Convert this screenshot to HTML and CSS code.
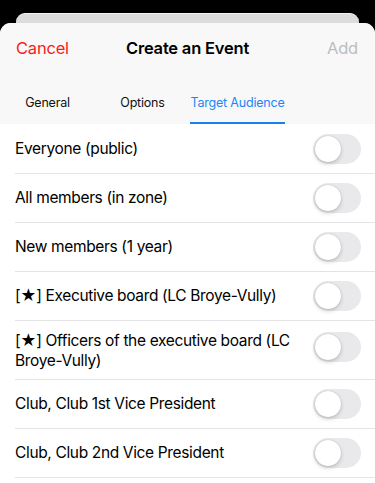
FILE: index.html
```
<!DOCTYPE html>
<html>
<head>
<meta charset="utf-8">
<link rel="stylesheet" href="styles.css">
</head>
<body>
<div class="back-card"></div>
<div class="sheet">
  <div class="header">
    <div class="nav">
      <span class="cancel">Cancel</span>
      <span class="title">Create an Event</span>
      <span class="add">Add</span>
    </div>
    <div class="tabs">
      <div class="tab">General</div>
      <div class="tab">Options</div>
      <div class="tab active">Target Audience</div>
    </div>
  </div>
  <div class="list">
    <div class="row"><div class="inner"><span class="label">Everyone (public)</span><span class="toggle"></span></div></div>
    <div class="row"><div class="inner"><span class="label">All members (in zone)</span><span class="toggle"></span></div></div>
    <div class="row"><div class="inner"><span class="label">New members (1 year)</span><span class="toggle"></span></div></div>
    <div class="row"><div class="inner"><span class="label">[★] Executive board (LC Broye-Vully)</span><span class="toggle"></span></div></div>
    <div class="row"><div class="inner two"><span class="label">[★] Officers of the executive board (LC Broye-Vully)</span><span class="toggle"></span></div></div>
    <div class="row"><div class="inner"><span class="label">Club, Club 1st Vice President</span><span class="toggle"></span></div></div>
    <div class="row"><div class="inner"><span class="label">Club, Club 2nd Vice President</span><span class="toggle"></span></div></div>
  </div>
</div>
</body>
</html>
```
FILE: styles.css
```
html, body {
  margin: 0;
  padding: 0;
  background: #000;
  height: 483px;
  overflow: hidden;
  font-family: "Inter", "Liberation Sans", sans-serif;
}
.back-card {
  margin: 13px 16px 0 16px;
  height: 10px;
  background: #dcdcdc;
  border-top: 1px solid #f4f4f4;
  box-sizing: border-box;
  border-radius: 9px 9px 0 0;
}
.sheet {
  background: #fff;
  border-radius: 11px 11px 0 0;
  overflow: hidden;
  height: 460px;
}
.header {
  background: #f8f8f8;
}
.nav {
  height: 50px;
  display: flex;
  align-items: center;
  justify-content: space-between;
  padding: 0 17px 0 16px;
  font-size: 16.5px;
  letter-spacing: -0.2px;
  position: relative;
}
.cancel { color: #fb1a1a; }
.add { color: #bdbdbd; }
.title {
  position: absolute;
  left: 0;
  right: 0;
  text-align: center;
  font-weight: 600;
  color: #000;
  pointer-events: none;
}
.tabs {
  display: flex;
  height: 51px;
}
.tab {
  width: 95px;
  box-sizing: border-box;
  text-align: center;
  padding-top: 21px;
  font-size: 12.5px;
  line-height: 18px;
  letter-spacing: -0.2px;
  white-space: nowrap;
  color: #111;
}
.tab.active {
  color: #1f85f5;
  border-bottom: 2px solid #1a7ff0;
}
.list {
  background: #fff;
  padding-top: 1px;
}
.row {
  padding-left: 15px;
}
.inner {
  display: flex;
  align-items: center;
  justify-content: space-between;
  min-height: 48px;
  border-bottom: 1px solid #e4e4e6;
  padding-right: 14px;
}
.inner.two {
  padding-top: 10px;
  padding-bottom: 9px;
  min-height: 0;
}
.label {
  font-size: 15.5px;
  line-height: 19.5px;
  letter-spacing: -0.35px;
  color: #000;
  flex: 1;
  padding-right: 8px;
}
.toggle {
  flex: none;
  width: 48px;
  height: 30px;
  border-radius: 15px;
  background: #e9e9eb;
  position: relative;
}
.inner.two .toggle {
  margin-bottom: 8px;
}
.toggle::after {
  content: "";
  position: absolute;
  left: 2px;
  top: 2px;
  width: 26px;
  height: 26px;
  border-radius: 50%;
  background: #fff;
  box-shadow: 0 2px 4px rgba(0,0,0,0.18), 0 0 1px rgba(0,0,0,0.25);
}
```
